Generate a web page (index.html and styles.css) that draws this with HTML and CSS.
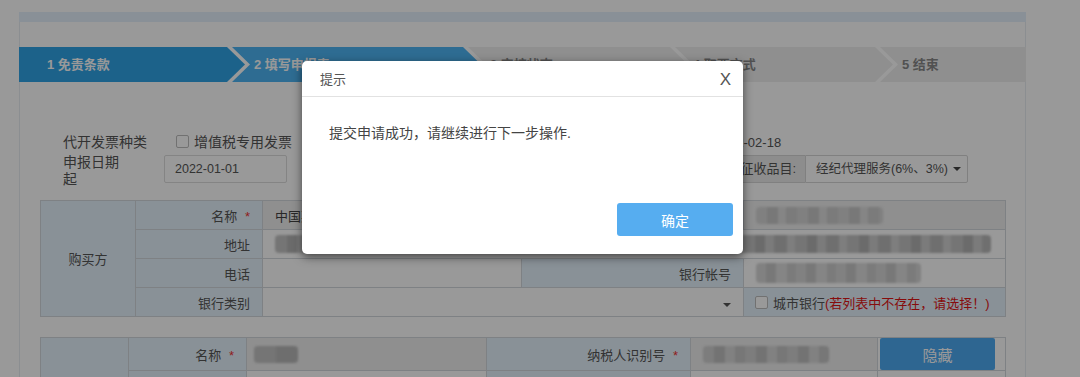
FILE: index.html
```html
<!DOCTYPE html>
<html lang="zh-CN">
<head>
<meta charset="utf-8">
<title>代开发票申请</title>
<link rel="stylesheet" href="styles.css">
</head>
<body>
<div class="page">
  <div class="topbar"></div>
  <ol class="steps">
    <li class="step done">1 免责条款</li>
    <li class="step current">2 填写申报表</li>
    <li class="step s3">3 审核状态</li>
    <li class="step s4">4 取票方式</li>
    <li class="step last">5 结束</li>
  </ol>

  <div class="form">
    <div class="row r1">
      <span class="lbl lbl-type">代开发票种类</span>
      <label class="chk"><span class="box"></span>增值税专用发票</label>
      <span class="date-end">申报日期止 2022-02-18</span>
    </div>
    <div class="row r2">
      <span class="lbl lbl-date">申报日期起</span>
      <span class="input date">2022-01-01</span>
      <div class="igroup">
        <span class="addon">征收品目:</span>
        <span class="select">经纪代理服务(6%、3%)<i class="caret"></i></span>
      </div>
    </div>
  </div>

  <table class="grid t1">
    <colgroup>
      <col class="a1"><col class="a2"><col class="a3"><col class="a4"><col class="a5">
    </colgroup>
    <tr>
      <td class="side" rowspan="4">购买方</td>
      <td class="lbl-cell">名称 <em>*</em></td>
      <td class="ro val">中国某某有限公司</td>
      <td class="lbl-cell">纳税人识别号 <em>*</em></td>
      <td class="ro val"><span class="mosaic m-name"></span></td>
    </tr>
    <tr>
      <td class="lbl-cell">地址</td>
      <td class="val" colspan="3"><span class="mosaic m-addr"></span></td>
    </tr>
    <tr>
      <td class="lbl-cell">电话</td>
      <td class="val"></td>
      <td class="lbl-cell">银行帐号</td>
      <td class="val"><span class="mosaic m-acct"></span></td>
    </tr>
    <tr>
      <td class="lbl-cell">银行类别</td>
      <td class="val sel" colspan="2"><i class="caret"></i></td>
      <td class="side-left"><label class="chk small"><span class="box"></span>城市银行<span class="warn">(若列表中不存在，请选择！)</span></label></td>
    </tr>
  </table>

  <table class="grid t2">
    <colgroup>
      <col class="b1"><col class="b2"><col class="b3"><col class="b4"><col class="b5"><col class="b6">
    </colgroup>
    <tr class="tall">
      <td class="side" rowspan="2"></td>
      <td class="lbl-cell">名称 <em>*</em></td>
      <td class="ro val v2"><span class="mosaic m-n2"></span></td>
      <td class="lbl-cell">纳税人识别号 <em>*</em></td>
      <td class="ro val"><span class="mosaic m-id2"></span></td>
      <td class="btn-cell"><button class="hide-btn">隐藏</button></td>
    </tr>
    <tr>
      <td class="lbl-cell">地址</td>
      <td class="val"></td>
      <td class="lbl-cell">电话</td>
      <td class="val"></td>
      <td class="val"></td>
    </tr>
  </table>
</div>

<div class="shade">
  <div class="dialog-box" role="dialog">
    <div class="dlg-head"><span class="title">提示</span><span class="close">X</span></div>
    <div class="dlg-body">提交申请成功，请继续进行下一步操作.</div>
    <div class="dlg-foot"><button class="ok">确定</button></div>
  </div>
</div>
</body>
</html>
```

FILE: styles.css
```css
* { box-sizing: border-box; margin: 0; padding: 0; }
html, body { height: 100%; }
body {
  background: #fff;
  font-family: "Liberation Sans", "Noto Sans CJK SC", sans-serif;
  font-size: 13px;
  color: #555;
  overflow: hidden;
  padding-top: 12px;
  position: relative;
}

.page {
  margin-left: 19px;
  width: 1007px;
  height: 400px;
  border-left: 1px solid #e8edf2;
  border-right: 1px solid #e8edf2;
}

.topbar { height: 10px; background: #e4f1fc; margin: 0 -1px; }

/* steps */
.steps {
  list-style: none;
  display: flex;
  height: 35px;
  margin: 25px -1px 0;
}
.step {
  flex: none;
  height: 35px;
  line-height: 35px;
  font-weight: bold;
  font-size: 13px;
  color: #888;
  background: #efefef;
  padding-left: 22px;
  white-space: nowrap;
  clip-path: polygon(0 0, calc(100% - 18px) 0, 100% 50%, calc(100% - 18px) 100%, 0 100%, 18px 50%);
}
.step + .step { margin-left: -13px; }
.done {
  width: 226px;
  background: #2fa4e7;
  color: #fff;
  padding-left: 28px;
  clip-path: polygon(0 0, calc(100% - 18px) 0, 100% 50%, calc(100% - 18px) 100%, 0 100%);
}
.current { width: 249px; background: #4db5f3; color: #fff; }
.s3 { width: 220px; }
.s4 { width: 218px; padding-left: 18px; }
.last {
  flex: 1;
  clip-path: polygon(0 0, 100% 0, 100% 100%, 0 100%, 18px 50%);
}

/* form rows */
.form { padding-left: 43px; margin-top: 49px; }
.row { display: flex; align-items: center; }
.r1 { height: 20px; font-size: 14px; }
.r2 { height: 28px; margin-top: 4px; align-items: flex-start; }
.lbl { font-size: 14px; color: #555; }
.lbl-type { width: 113px; }
.lbl-date { width: 64px; margin-right: 37px; line-height: 17px; margin-top: -1px; }
.chk { display: inline-flex; align-items: center; white-space: nowrap; }
.box {
  width: 13px; height: 13px;
  border: 1px solid #bdbdbd;
  border-radius: 2px;
  background: #fff;
  margin-right: 5px;
}
.date-end { margin-left: 354px; font-size: 13px; white-space: nowrap; }

.input {
  height: 28px;
  border: 1px solid #dcdcdc;
  border-radius: 2px;
  background: #fff;
  line-height: 26px;
  padding-left: 10px;
  font-size: 12.5px;
}
.date { width: 123px; }

.igroup { display: flex; margin-left: auto; margin-right: 57px; height: 28px; }
.addon {
  width: 72px;
  background: #ececec;
  border: 1px solid #d6d6d6;
  border-right: 0;
  text-align: right;
  padding-right: 9px;
  line-height: 26px;
  font-size: 13px;
  white-space: nowrap;
  border-radius: 2px 0 0 2px;
}
.select {
  width: 163px;
  border: 1px solid #d6d6d6;
  background: #fff;
  line-height: 26px;
  padding-left: 10px;
  font-size: 12.5px;
  white-space: nowrap;
  display: flex;
  align-items: center;
  border-radius: 0 2px 2px 0;
}
.caret {
  display: inline-block;
  width: 0; height: 0;
  border-left: 4px solid transparent;
  border-right: 4px solid transparent;
  border-top: 4px solid #444;
  margin-left: 5px;
}

/* tables */
.grid {
  border-collapse: collapse;
  table-layout: fixed;
  width: 965px;
  margin-left: 20px;
  font-size: 13px;
}
.t1 { margin-top: 17px; }
.t2 { margin-top: 20px; }
.grid td {
  border: 1px solid #d3d8dd;
  height: 29px;
  padding: 0;
  white-space: nowrap;
  overflow: hidden;
}
.t2 .tall td { height: 33px; }
.a1 { width: 95px; } .a2 { width: 127px; } .a3 { width: 259px; } .a4 { width: 222px; } .a5 { width: 262px; }
.b1 { width: 88px; } .b2 { width: 118px; } .b3 { width: 240px; } .b4 { width: 204px; } .b5 { width: 187px; } .b6 { width: 128px; }

.side { background: #e5f2fc; text-align: center; }
.lbl-cell { background: #e5f2fc; text-align: right; padding-right: 12px !important; }
.lbl-cell em { color: #e33; font-style: normal; margin-left: 4px; }
.side-left { background: #e5f2fc; padding-left: 11px !important; }
.val { background: #fff; padding-left: 12px !important; color: #444; }
.ro { background: #eeeeee; }
.v2 { padding-left: 7px !important; }
.sel { text-align: right; padding-right: 12px !important; }
.sel .caret { border-top-color: #555; }

.small { font-size: 13px; }
.warn { color: #e01515; }

.mosaic {
  display: inline-block;
  vertical-align: middle;
  height: 17px;
  filter: blur(1.3px);
  border-radius: 4px;
}
.m-name {
  width: 127px;
  background: repeating-linear-gradient(90deg, #d6d6d6 0 11px, #c8c8c8 11px 22px, #dedede 22px 30px, #cdcdcd 30px 41px);
}
.m-addr {
  width: 716px;
  height: 18px;
  background: repeating-linear-gradient(90deg, #c4c4c4 0 12px, #b3b3b3 12px 22px, #cdcdcd 22px 31px, #bababa 31px 44px, #d2d2d2 44px 52px);
}
.m-acct {
  width: 165px;
  height: 20px;
  background: repeating-linear-gradient(90deg, #d8d8d8 0 10px, #c9c9c9 10px 20px, #dedede 20px 31px, #cecece 31px 40px);
}
.m-n2 {
  width: 44px;
  background: linear-gradient(90deg, #c3c3c3 0 50%, #b8b8b8 50% 100%);
}
.m-id2 {
  width: 126px;
  background: repeating-linear-gradient(90deg, #d0d0d0 0 11px, #c0c0c0 11px 22px, #d8d8d8 22px 32px, #c6c6c6 32px 42px);
}

.btn-cell { padding: 0 10px 0 2px !important; background: #fff; }
.hide-btn {
  display: block;
  width: 115px;
  height: 32px;
  border: 0;
  border-radius: 2px;
  background: #4eaaf2;
  color: #fff;
  font-family: inherit;
  font-size: 15px;
}

/* dialog layer: dims the page and holds the dialog */
.shade {
  position: absolute;
  top: 0;
  left: 0;
  width: 1080px;
  height: 377px;
  background: rgba(0, 0, 0, 0.4);
  z-index: 10;
}
.dialog-box {
  position: absolute;
  left: 302px;
  top: 61px;
  width: 441px;
  height: 193px;
  background: #fff;
  border-radius: 5px;
  box-shadow: 0 3px 10px rgba(0, 0, 0, 0.55);
  display: flex;
  flex-direction: column;
}
.dlg-head {
  height: 36px;
  border-bottom: 1px solid #e2e2e2;
  display: flex;
  align-items: center;
  justify-content: space-between;
  padding: 0 12px 0 18px;
}
.title { font-size: 13px; color: #555; }
.close { font-size: 17px; color: #555; line-height: 1; margin-top: 1px; }
.dlg-body {
  padding: 26px 0 0 27px;
  font-size: 14px;
  line-height: 20px;
  color: #444;
}
.dlg-foot {
  margin-top: auto;
  display: flex;
  justify-content: flex-end;
  padding: 0 10px 18px 0;
}
.ok {
  width: 116px;
  height: 33px;
  border: 0;
  border-radius: 3px;
  background: #56adf0;
  color: #fff;
  font-family: inherit;
  font-size: 14px;
}
```
